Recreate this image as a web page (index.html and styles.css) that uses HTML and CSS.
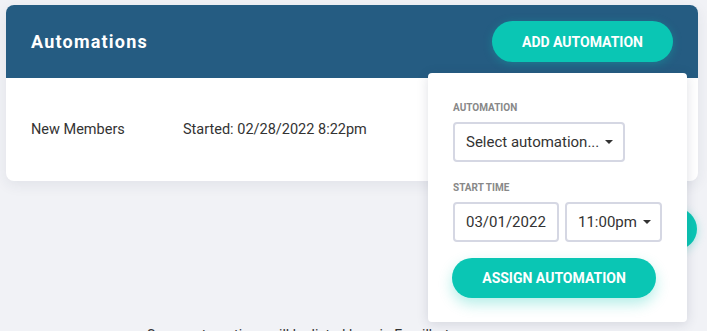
FILE: index.html
```html
<!doctype html>
<html>
	<head>
		<meta charset="UTF-8">
		<title>Automations</title>
		<link rel="stylesheet" href="styles.css">
	</head>

	<body>
		<div class="page">
			<div class="card">
				<div class="card-head">
					<h2 class="title">Automations</h2>
					<span class="btn btn-add">ADD AUTOMATION</span>
				</div>
				<ul class="list">
					<li class="row">
						<span class="name">New Members</span>
						<span class="started">Started: 02/28/2022 8:22pm</span>
					</li>
				</ul>
			</div>

			<span class="fab"></span>

			<p class="note">Some automations will be listed here in Emailbot soon.</p>

			<!-- popup of add automation -->
			<div class="popup">
				<label class="label">AUTOMATION</label>
				<div class="field select select-auto">
					<span>Select automation...</span>
					<i class="caret"></i>
				</div>
				<label class="label">START TIME</label>
				<div class="line">
					<div class="field date">03/01/2022</div>
					<div class="field select time">
						<span>11:00pm</span>
						<i class="caret"></i>
					</div>
				</div>
				<span class="btn btn-assign">ASSIGN AUTOMATION</span>
			</div>
		</div>
	</body>
</html>
```

FILE: styles.css
```css
* {
	margin: 0;
	padding: 0;
	box-sizing: border-box;
}

li {
	list-style: none;
}

body {
	background-color: #f1f2f6;
	font-family: Roboto, "Liberation Sans", sans-serif;
	color: #333;
	overflow: hidden;
}

.page {
	position: relative;
	padding: 5px 9px 0 6px;
	height: 331px;
}

.card {
	background-color: #fff;
	border-radius: 8px;
	overflow: hidden;
	box-shadow: 0 4px 14px rgba(40, 50, 80, .08);
}

.card-head {
	display: flex;
	align-items: center;
	justify-content: space-between;
	height: 73px;
	padding: 0 25px 0 25px;
	background-color: #255c82;
}

.title {
	color: #fff;
	font-size: 18px;
	font-weight: 700;
	letter-spacing: 1.2px;
	margin-top: -1px;
}

.btn {
	display: flex;
	align-items: center;
	justify-content: center;
	background-color: #0ac6b4;
	color: #fff;
	font-weight: 700;
	font-size: 14px;
	white-space: nowrap;
	border-radius: 21px;
	cursor: pointer;
}

.btn-add {
	width: 181px;
	height: 41px;
	box-shadow: 0 2px 10px rgba(10, 198, 180, .3);
}

.list .row {
	display: flex;
	align-items: center;
	height: 103px;
	padding: 0 25px;
	font-size: 14.5px;
}

.row .name {
	width: 152px;
}

.fab {
	position: absolute;
	left: 655px;
	top: 208px;
	width: 42px;
	height: 42px;
	border-radius: 50%;
	background-color: #0ac6b4;
	box-shadow: 0 2px 10px rgba(10, 198, 180, .3);
}

.note {
	margin-top: 146px;
	padding-left: 141px;
	font-size: 14px;
	color: #333;
}

.popup {
	position: absolute;
	left: 428px;
	top: 73px;
	width: 259px;
	height: 249px;
	padding: 29px 25px 0 25px;
	background-color: #fff;
	border-radius: 4px;
	box-shadow: 0 2px 12px rgba(40, 50, 80, .15);
}

.label {
	display: block;
	font-size: 10px;
	font-weight: 700;
	color: #888;
	height: 12px;
	line-height: 12px;
	margin-bottom: 8px;
}

.field {
	display: flex;
	align-items: center;
	height: 40px;
	padding: 0 10px 0 11px;
	border: 2px solid #d5d7e3;
	border-radius: 4px;
	font-size: 15px;
	color: #333;
	white-space: nowrap;
}

.select {
	justify-content: space-between;
}

.select-auto {
	width: 172px;
	margin-bottom: 20px;
}

.caret {
	flex: none;
	width: 0;
	height: 0;
	border-left: 4px solid transparent;
	border-right: 4px solid transparent;
	border-top: 4px solid #333;
	margin-left: 6px;
}

.line {
	display: flex;
	gap: 6px;
	margin-bottom: 16px;
}

.date {
	width: 106px;
}

.time {
	width: 97px;
}

.btn-assign {
	width: 204px;
	height: 40px;
	margin-left: -1px;
	border-radius: 20px;
	box-shadow: 0 6px 14px rgba(10, 198, 180, .3);
}
```
